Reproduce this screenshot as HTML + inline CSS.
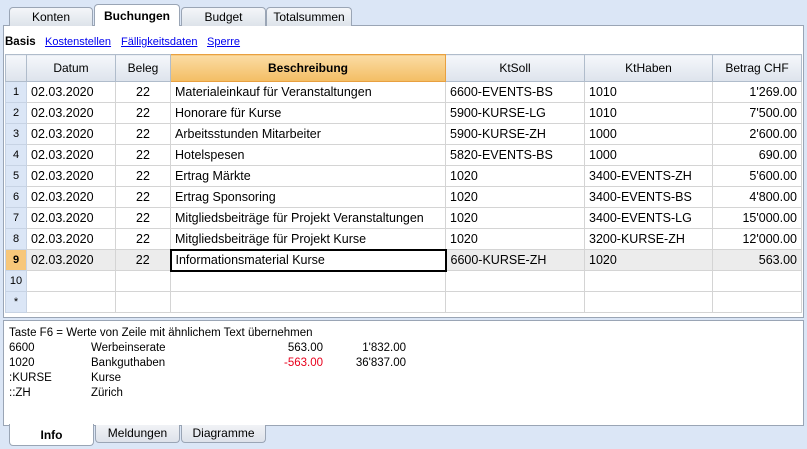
<!DOCTYPE html>
<html><head><meta charset="utf-8"><style>
*{margin:0;padding:0;box-sizing:border-box}
body{width:807px;height:449px;background:#dbe6f6;font-family:"Liberation Sans",sans-serif;font-size:12px;color:#000;position:relative;overflow:hidden}
.a{position:absolute}
.tab{position:absolute;top:7px;height:19px;border:1px solid #9aa5b5;border-bottom:none;border-radius:4px 4px 0 0;background:linear-gradient(#f4f6f9,#dde3ea);text-align:center;font-size:12px;line-height:18px}
.panel{position:absolute;left:3px;top:25px;width:801px;height:293px;background:#fff;border:1px solid #9aa5b5}
table{border-collapse:collapse;position:absolute;left:5px;top:54px;width:796px;table-layout:fixed;border:1px solid #8a96a6}
td,th{border:1px solid #d4d4d4;height:21px;padding:0 4px;white-space:nowrap;overflow:hidden;font-size:12.5px}
th{height:27px;font-weight:normal;background:linear-gradient(#f5f7fb,#dde3ec);border-color:#b0bccb;font-size:12px}
th.o{background:linear-gradient(#fbdca4,#f3bd64);font-weight:bold;border-color:#e8a040}
td.n{background:#dbe6f6;text-align:center;padding:0;font-size:11px;border-color:#c7d3e4}
td.c{text-align:center}td.r{text-align:right}
tr.s td{background:#ececec}
tr.s td.n{background:#f7c77a;font-weight:bold}
.info{position:absolute;left:3px;top:320px;width:801px;height:106px;background:#fff;border:1px solid #9aa5b5}
.bt{position:absolute;top:425px;height:18px;border:1px solid #9aa5b5;border-top:none;border-radius:0 0 4px 4px;background:linear-gradient(#f1f3f6,#dde2ea);text-align:center;font-size:12px;line-height:16px}
.l{position:absolute;font-size:11.5px}
.lk{position:absolute;top:36px;color:#0000ee;text-decoration:underline;font-size:11px}
</style></head><body>
<div class="panel"></div>
<div class="tab" style="left:9px;width:84px">Konten</div>
<div class="tab" style="left:94px;width:86px;top:4px;height:22px;background:#fff;font-weight:bold;line-height:22px">Buchungen</div>
<div class="tab" style="left:181px;width:85px">Budget</div>
<div class="tab" style="left:266px;width:86px">Totalsummen</div>
<div class="a" style="left:5px;top:36px;font-weight:bold;font-size:11.5px">Basis</div>
<div class="lk" style="left:45px">Kostenstellen</div>
<div class="lk" style="left:121px">Fälligkeitsdaten</div>
<div class="lk" style="left:207px">Sperre</div>
<table>
<colgroup><col style="width:21px"><col style="width:89px"><col style="width:55px"><col style="width:275px"><col style="width:139px"><col style="width:128px"><col style="width:89px"></colgroup>
<tr><th></th><th>Datum</th><th>Beleg</th><th class="o">Beschreibung</th><th>KtSoll</th><th>KtHaben</th><th>Betrag CHF</th></tr>
<tr><td class="n">1</td><td>02.03.2020</td><td class="c">22</td><td>Materialeinkauf für Veranstaltungen</td><td>6600-EVENTS-BS</td><td>1010</td><td class="r">1'269.00</td></tr>
<tr><td class="n">2</td><td>02.03.2020</td><td class="c">22</td><td>Honorare für Kurse</td><td>5900-KURSE-LG</td><td>1010</td><td class="r">7'500.00</td></tr>
<tr><td class="n">3</td><td>02.03.2020</td><td class="c">22</td><td>Arbeitsstunden Mitarbeiter</td><td>5900-KURSE-ZH</td><td>1000</td><td class="r">2'600.00</td></tr>
<tr><td class="n">4</td><td>02.03.2020</td><td class="c">22</td><td>Hotelspesen</td><td>5820-EVENTS-BS</td><td>1000</td><td class="r">690.00</td></tr>
<tr><td class="n">5</td><td>02.03.2020</td><td class="c">22</td><td>Ertrag Märkte</td><td>1020</td><td>3400-EVENTS-ZH</td><td class="r">5'600.00</td></tr>
<tr><td class="n">6</td><td>02.03.2020</td><td class="c">22</td><td>Ertrag Sponsoring</td><td>1020</td><td>3400-EVENTS-BS</td><td class="r">4'800.00</td></tr>
<tr><td class="n">7</td><td>02.03.2020</td><td class="c">22</td><td>Mitgliedsbeiträge für Projekt Veranstaltungen</td><td>1020</td><td>3400-EVENTS-LG</td><td class="r">15'000.00</td></tr>
<tr><td class="n">8</td><td>02.03.2020</td><td class="c">22</td><td>Mitgliedsbeiträge für Projekt Kurse</td><td>1020</td><td>3200-KURSE-ZH</td><td class="r">12'000.00</td></tr>
<tr class="s"><td class="n">9</td><td>02.03.2020</td><td class="c">22</td><td style="background:#fff;border:2px solid #000">Informationsmaterial Kurse</td><td>6600-KURSE-ZH</td><td>1020</td><td class="r">563.00</td></tr>
<tr><td class="n">10</td><td></td><td></td><td></td><td></td><td></td><td></td></tr>
<tr><td class="n">*</td><td></td><td></td><td></td><td></td><td></td><td></td></tr>
</table>
<div class="info"></div>
<div class="l" style="left:9px;top:327px">Taste F6 = Werte von Zeile mit ähnlichem Text übernehmen</div>
<div class="l" style="left:9px;top:342px">6600</div><div class="l" style="left:91px;top:342px">Werbeinserate</div><div class="l" style="left:240px;top:342px;width:83px;text-align:right">563.00</div><div class="l" style="left:320px;top:342px;width:86px;text-align:right">1'832.00</div>
<div class="l" style="left:9px;top:357px">1020</div><div class="l" style="left:91px;top:357px">Bankguthaben</div><div class="l" style="left:240px;top:357px;width:83px;text-align:right;color:#e8001c">-563.00</div><div class="l" style="left:320px;top:357px;width:86px;text-align:right">36'837.00</div>
<div class="l" style="left:9px;top:372px">:KURSE</div><div class="l" style="left:91px;top:372px">Kurse</div>
<div class="l" style="left:9px;top:387px">::ZH</div><div class="l" style="left:91px;top:387px">Zürich</div>
<div class="bt" style="left:9px;width:85px;height:22px;background:#fff;font-weight:bold;line-height:22px;top:424px">Info</div>
<div class="bt" style="left:95px;width:85px">Meldungen</div>
<div class="bt" style="left:181px;width:85px">Diagramme</div>
</body></html>
